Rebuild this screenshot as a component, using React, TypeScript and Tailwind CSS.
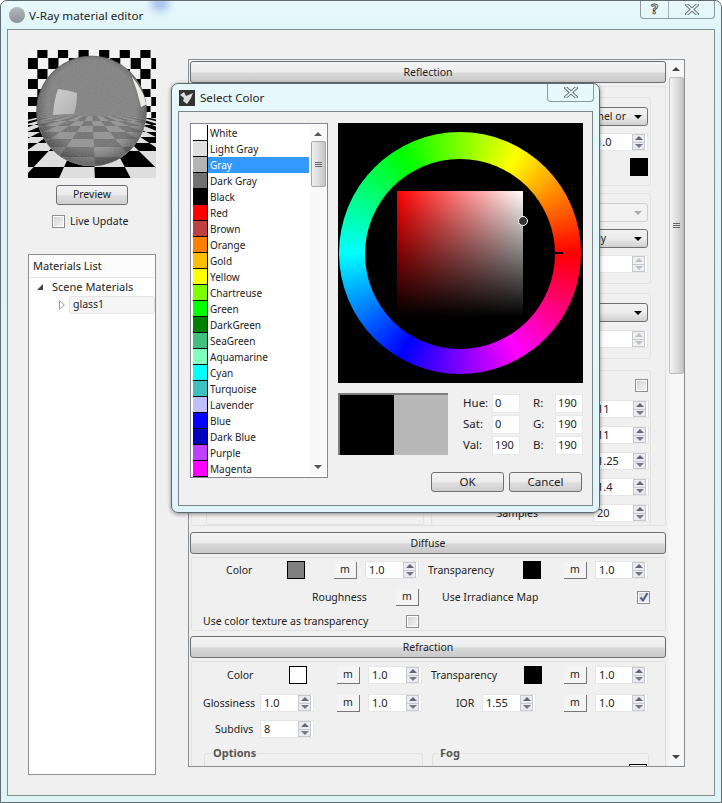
import React from "react";

const Tri = ({ up, cls = "border-b-[#555] border-t-[#555]" }: { up?: boolean; cls?: string }) => (
  <div className={`w-0 h-0 border-l-[4px] border-r-[4px] border-l-transparent border-r-transparent ${up ? "border-b-[4px] border-t-0" : "border-t-[4px] border-b-0"} ${cls}`} />
);

const Spinner = ({ value, w = "w-[53px]", disabled }: { value?: string; w?: string; disabled?: boolean }) => (
  <div className={`${w} h-[18px] bg-white flex items-center border border-[#e6e6e6] shrink-0`}>
    <span className="flex-1 pl-[3px] pb-px leading-none text-[11px] text-[#222] whitespace-nowrap">{value}</span>
    <div className={`w-[13px] h-[16px] mr-[2px] flex flex-col border border-[#c4c8d0] ${disabled ? "bg-[#f0f0f0]" : "bg-[#eaeaf0]"}`}>
      <div className="flex-1 flex items-center justify-center border-b border-[#c4c8d0]"><Tri up cls={disabled ? "border-b-[#c0c0c0]" : "border-b-[#667]"} /></div>
      <div className="flex-1 flex items-center justify-center"><Tri cls={disabled ? "border-t-[#c0c0c0]" : "border-t-[#778]"} /></div>
    </div>
  </div>
);

const MBtn = ({ ml = "" }: { ml?: string }) => (
  <div className={`${ml} w-[23px] h-[17px] shrink-0 bg-[#f4f4f4] border-r border-b border-[#777] flex items-center justify-center leading-none text-[#222]`}>m</div>
);

const Swatch = ({ color, ml = "" }: { color: string; ml?: string }) => (
  <div className={`${ml} ${color} w-[18px] h-[18px] shrink-0 border border-black`} />
);

const Check = ({ checked, ml = "" }: { checked?: boolean; ml?: string }) => (
  <div className={`${ml} w-[13px] h-[13px] shrink-0 border border-[#8e8f8f] p-[1px] bg-white flex`}>
    <div className="flex-1 bg-gradient-to-br from-[#d4d4d4] to-[#f4f4f4] flex items-center justify-center">
      {checked && (
        <svg width="10" height="10" viewBox="0 0 10 10"><path d="M1.5 5.5 L4 8.5 L8.5 1" stroke="#4a5f8f" strokeWidth="2" fill="none" /></svg>
      )}
    </div>
  </div>
);

const Combo = ({ text, disabled, gap = "gap-[8px]" }: { text?: string; disabled?: boolean; gap?: string }) => (
  <div className={`w-[100px] h-[19px] rounded-[3px] flex items-center justify-end ${gap} pr-[5px] border whitespace-nowrap ${disabled ? "border-[#d0d0d0] bg-[#f2f2f2]" : "border-[#707070] bg-gradient-to-b from-[#f2f2f2] via-[#ebebeb] to-[#cfcfcf]"}`}>
    <span className="text-[#222]">{text}</span>
    <div className={`w-0 h-0 border-l-[4px] border-r-[4px] border-t-[4px] border-l-transparent border-r-transparent ${disabled ? "border-t-[#aaa]" : "border-t-black"}`} />
  </div>
);

const Header = ({ title }: { title: string }) => (
  <div className="h-[22px] w-[476px] shrink-0 rounded-[3px] border border-[#6b6f72] bg-[linear-gradient(to_bottom,#f4f4f4,#ececec_50%,#d8d8d8_55%,#c9c9c9)] flex items-center justify-center pt-px text-[#222]">
    {title}
  </div>
);

const X = ({ size = 14 }: { size?: number }) => (
  <svg width={size} height={size - 3} viewBox="0 0 14 11">
    <path d="M2 1 L12 10 M12 1 L2 10" stroke="#5f6a72" strokeWidth="3.4" strokeLinecap="square" fill="none" />
    <path d="M2 1 L12 10 M12 1 L2 10" stroke="#f4fbfd" strokeWidth="1.6" strokeLinecap="square" fill="none" />
  </svg>
);

const Preview = () => {
  const wallRows = [0, 8, 19, 29, 39, 47, 56, 62, 68];
  const wall: React.ReactNode[] = [];
  for (let r = 0; r < wallRows.length - 1; r++) {
    for (let c = -1; c < 7; c++) {
      const x = 9.3 + c * 20.6 + (r % 2 ? -9.6 : 0);
      wall.push(<rect key={`w${r}-${c}`} x={x} y={wallRows[r]} width={10.2} height={wallRows[r + 1] - wallRows[r]} fill="#000" />);
    }
  }
  const cells = (rows: number[], vy: number, k: number, a: string, b: string | null, prefix: string) => {
    const out: React.ReactNode[] = [];
    const X0 = (i: number, y: number) => 64 + (i + 0.08) * k * (y - vy);
    for (let r = 0; r < rows.length - 1; r++) {
      for (let i = -14; i < 14; i++) {
        const even = (((r + i) % 2) + 2) % 2 === 0;
        const fill = even ? a : b;
        if (!fill) continue;
        const y1 = rows[r], y2 = rows[r + 1];
        out.push(<polygon key={`${prefix}${r}-${i}`} points={`${X0(i, y1)},${y1} ${X0(i + 1, y1)},${y1} ${X0(i + 1, y2)},${y2} ${X0(i, y2)},${y2}`} fill={fill} />);
      }
    }
    return out;
  };
  return (
    <svg width="128" height="128" viewBox="0 0 128 128" className="block">
      <defs>
        <filter id="noise" x="0" y="0" width="100%" height="100%">
          <feTurbulence type="fractalNoise" baseFrequency="0.9" numOctaves="2" seed="4" />
          <feColorMatrix type="matrix" values="0 0 0 0 0.42  0 0 0 0 0.42  0 0 0 0 0.42  1.4 0 0 0 -0.5" />
        </filter>
        <clipPath id="ball"><circle cx="63.5" cy="61" r="55" /></clipPath>
        <radialGradient id="shade" cx="50%" cy="45%" r="52%">
          <stop offset="78%" stopColor="#000" stopOpacity="0" />
          <stop offset="100%" stopColor="#000" stopOpacity="0.3" />
        </radialGradient>
        <linearGradient id="hl" x1="0" y1="0" x2="1" y2="1">
          <stop offset="0" stopColor="#cfcfcf" />
          <stop offset="1" stopColor="#b0b0b0" />
        </linearGradient>
      </defs>
      <rect width="128" height="128" fill="#f2f2f2" />
      {wall}
      <rect y="68" width="128" height="60" fill="#dedede" />
      {cells([68, 75, 82, 87, 93, 101, 117, 128], 55, 0.49, "#000", null, "f")}
      <circle cx="63.5" cy="61" r="55" fill="#858585" stroke="#555" strokeWidth="0.6" />
      <g clipPath="url(#ball)">
        <rect y="66" width="128" height="52" fill="#8a8a8a" />
        {cells([66, 71, 76, 82, 89, 97, 107, 118], 60, 0.75, "#767676", "#969696", "r")}
        <circle cx="63.5" cy="61" r="55" fill="url(#shade)" />
        <rect width="128" height="128" filter="url(#noise)" opacity="0.35" />
        <path d="M30 39 Q40 40 49 43 Q49 55 46 64 Q35 64 25 65 Q26 50 30 39Z" fill="url(#hl)" />
        <path d="M104 27 Q114 38 119 54 L113 57 Q110 42 104 27Z" fill="#ecece6" />
      </g>
    </svg>
  );
};

const colors: [string, string][] = [
  ["White", "bg-[#ffffff]"],
  ["Light Gray", "bg-[#e0e0e0]"],
  ["Gray", "bg-[#b4b4b4]"],
  ["Dark Gray", "bg-[#707070]"],
  ["Black", "bg-[#000000]"],
  ["Red", "bg-[#ff0000]"],
  ["Brown", "bg-[#bf4040]"],
  ["Orange", "bg-[#ff8000]"],
  ["Gold", "bg-[#ffbf00]"],
  ["Yellow", "bg-[#ffff00]"],
  ["Chartreuse", "bg-[#80ff00]"],
  ["Green", "bg-[#00ff00]"],
  ["DarkGreen", "bg-[#008000]"],
  ["SeaGreen", "bg-[#40bf80]"],
  ["Aquamarine", "bg-[#80ffbf]"],
  ["Cyan", "bg-[#00ffff]"],
  ["Turquoise", "bg-[#40bfbf]"],
  ["Lavender", "bg-[#bfbfff]"],
  ["Blue", "bg-[#0000ff]"],
  ["Dark Blue", "bg-[#0000bf]"],
  ["Purple", "bg-[#bf40ff]"],
  ["Magenta", "bg-[#ff00ff]"],
];

const Field = ({ label, value, w, ml = "" }: { label: string; value: string; w: string; ml?: string }) => (
  <div className={`flex items-center h-[20px] ${ml}`}>
    <span className={`${w} text-[11.5px] text-[#222]`}>{label}</span>
    <div className="w-[28px] h-[19px] bg-white border border-[#e8e8e8] pl-[2px] text-[11px] leading-[16px] text-[#222]">{value}</div>
  </div>
);

const DlgBtn = ({ label }: { label: string }) => (
  <div className="w-[73px] h-[20px] rounded-[3px] border border-[#707070] bg-[linear-gradient(to_bottom,#f2f2f2,#ebebeb_50%,#dddddd_55%,#cfcfcf)] flex items-center justify-center text-[11.5px] text-[#222]">{label}</div>
);

const Dialog = () => (
  <div className="absolute left-[170px] top-[82px] w-[429px] h-[430px] rounded-[7px] border border-[#5d6a70] bg-[linear-gradient(to_bottom,#e6f8fc,#dff5fb)] shadow-[0_1px_4px_rgba(0,0,0,0.45)] flex flex-col">
    <div className="h-[27px] flex items-center pl-[7px] shrink-0">
      <div className="w-[16px] h-[16px] bg-[#333] flex items-center justify-center overflow-hidden">
        <svg width="16" height="16" viewBox="0 0 16 16"><path d="M1 5 L5 2 L7 6 L14 3 L12 8 L8 14 L4 11 L5 8Z" fill="#dcdcdc" /></svg>
      </div>
      <span className="ml-[5px] text-[11.6px] text-[#222]">Select Color</span>
    </div>
    <div className="absolute right-[5px] top-0 w-[47px] h-[18px] rounded-b-[4px] border border-t-0 border-[#8c989e] bg-[#e8f9fd] flex items-center justify-center">
      <X />
    </div>
    <div className="mx-[6px] h-[395px] bg-[#f0f0f0] border border-[#7b868c] pl-[11px] pt-[11px] flex">
      <div className="w-[138px] h-[355px] border border-[#828790] bg-white flex shrink-0 p-[1px]">
        <div className="w-[118px] flex flex-col">
          {colors.map(([n, c]) => (
            <div key={n} className={`h-[16px] flex items-stretch shrink-0 ${n === "Gray" ? "bg-[#3399ff] text-white" : "text-[#222]"}`}>
              <div className="w-[16px] shrink-0 bg-white pl-[1px]">
                <div className={`${c} h-[16px] w-[15px] border-b border-r border-black`} />
              </div>
              <span className="pl-[2px] text-[10px] leading-[16px]">{n}</span>
            </div>
          ))}
        </div>
        <div className="w-[16px] ml-[1px] flex flex-col items-center pt-[7px] pb-[7px] bg-[#f8f8f8]">
          <Tri up cls="border-b-[#555]" />
          <div className="mt-[5px] w-[15px] h-[46px] rounded-[2px] border border-[#a8a8a8] bg-[linear-gradient(to_right,#f0f0f0,#dcdcdc,#c4c4c4)] flex flex-col items-center justify-center gap-[1px]">
            <div className="w-[7px] h-px bg-[#666]" />
            <div className="w-[7px] h-px bg-[#666]" />
            <div className="w-[7px] h-px bg-[#666]" />
          </div>
          <div className="flex-1" />
          <Tri cls="border-t-[#555]" />
        </div>
      </div>
      <div className="ml-[10px] w-[245px] flex flex-col">
        <div className="w-[245px] h-[260px] bg-black flex items-center pl-px">
          <div className="relative w-[242px] h-[242px] rounded-full bg-[conic-gradient(from_90deg,#ff0000,#ff00ff,#0000ff,#00ffff,#00ff00,#ffff00,#ff0000)] flex items-center justify-center">
            <div className="mt-[2px] w-[190px] h-[190px] rounded-full bg-black flex items-center justify-center">
              <div className="relative w-[126px] h-[126px] bg-[linear-gradient(to_bottom,transparent,#000),linear-gradient(to_right,#ff0000,#ffffff)]">
                <div className="absolute left-[121px] top-[25px] w-[10px] h-[10px] rounded-full border border-white bg-[#333]" />
              </div>
            </div>
            <div className="absolute left-[214px] top-[120px] w-[10px] h-[2px] bg-black" />
          </div>
        </div>
        <div className="mt-[10px] flex">
          <div className="w-[110px] h-[62px] border-l-2 border-t-2 border-[#7d7d7d] flex">
            <div className="w-[54px] bg-black" />
            <div className="flex-1 bg-[#b8b8b8]" />
          </div>
          <div className="ml-[15px] flex flex-col gap-[1px]">
            <Field label="Hue:" value="0" w="w-[29px]" />
            <Field label="Sat:" value="0" w="w-[29px]" />
            <Field label="Val:" value="190" w="w-[29px]" />
          </div>
          <div className="ml-[13px] flex flex-col gap-[1px]">
            <Field label="R:" value="190" w="w-[22px]" />
            <Field label="G:" value="190" w="w-[22px]" />
            <Field label="B:" value="190" w="w-[22px]" />
          </div>
        </div>
        <div className="mt-[17px] flex justify-end gap-[5px] pr-[1px]">
          <DlgBtn label="OK" />
          <DlgBtn label="Cancel" />
        </div>
      </div>
    </div>
  </div>
);

const Group = ({ h, mt, children }: { h: string; mt: string; children?: React.ReactNode }) => (
  <div className={`${h} ${mt} w-[220px] rounded-[3px] border border-[#e2e2e2] flex flex-col items-end shrink-0 pr-[2px]`}>{children}</div>
);

const ReflectionBody = () => (
  <div className="mt-[3px] ml-[1px] w-[475px] h-[440px] border border-[#e2e2e2] rounded-[2px] shrink-0 flex">
    <div className="ml-[14px] mt-[10px] w-[218px] h-[428px] border border-[#e2e2e2] rounded-[2px]" />
    <div className="ml-[7px] flex flex-col">
      <Group h="h-[89px]" mt="mt-[10px]">
        <div className="mt-[9px]"><Combo text="Channel or" /></div>
        <div className="mt-[7px]"><Spinner value="1.0" w="w-[56px]" /></div>
        <div className="mt-[7px]"><Swatch color="bg-black" /></div>
      </Group>
      <Group h="h-[91px]" mt="mt-[7px]">
        <div className="mt-[9px]"><Combo disabled /></div>
        <div className="mt-[7px]"><Combo text="Only" gap="gap-[28px]" /></div>
        <div className="mt-[7px]"><Spinner disabled /></div>
      </Group>
      <Group h="h-[66px]" mt="mt-[9px]">
        <div className="mt-[9px]"><Combo /></div>
        <div className="mt-[8px]"><Spinner disabled /></div>
      </Group>
      <div className="h-[156px] mt-[11px] w-[220px] rounded-[3px] border border-[#e2e2e2] flex flex-col items-end shrink-0 pr-[1px]">
        <div className="mt-[8px] mr-[1px]"><Check /></div>
        <div className="mt-[8px]"><Spinner value="11" w="w-[56px]" /></div>
        <div className="mt-[8px]"><Spinner value="11" w="w-[56px]" /></div>
        <div className="mt-[8px]"><Spinner value="1.25" w="w-[56px]" /></div>
        <div className="mt-[8px]"><Spinner value="1.4" w="w-[56px]" /></div>
        <div className="mt-[8px] flex items-center">
          <span className="mr-[55px] pt-px text-[#222]">Samples</span>
          <Spinner value="20" w="w-[56px]" />
        </div>
      </div>
    </div>
  </div>
);

const Label = ({ w, text, cls = "" }: { w: string; text: string; cls?: string }) => (
  <span className={`${w} ${cls} shrink-0 whitespace-nowrap pt-px text-[#222]`}>{text}</span>
);

const DiffuseBody = () => (
  <div className="mt-[3px] ml-[1px] w-[475px] h-[74px] border border-[#e2e2e2] rounded-[2px] shrink-0 flex flex-col">
    <div className="flex items-center h-[18px] mt-[3px]">
      <Label w="w-[60px]" cls="ml-[34px]" text="Color" />
      <Swatch color="bg-[#808080]" ml="ml-px" />
      <MBtn ml="ml-[29px]" />
      <div className="ml-[8px]"><Spinner value="1.0" w="w-[54px]" /></div>
      <Label w="w-[95px]" cls="ml-[9px]" text="Transparency" />
      <Swatch color="bg-black" />
      <MBtn ml="ml-[23px]" />
      <div className="ml-[8px]"><Spinner value="1.0" /></div>
    </div>
    <div className="flex items-center h-[18px] mt-[9px]">
      <Label w="w-[84px]" cls="ml-[120px]" text="Roughness" />
      <MBtn />
      <Label w="w-[195px]" cls="ml-[23px]" text="Use Irradiance Map" />
      <Check checked />
    </div>
    <div className="flex items-center h-[18px] mt-[6px]">
      <Label w="w-[203px]" cls="ml-[11px]" text="Use color texture as transparency" />
      <Check />
    </div>
  </div>
);

const RefractionBody = () => (
  <div className="mt-[3px] ml-[1px] w-[475px] h-[110px] border border-[#e2e2e2] rounded-[2px] shrink-0 flex flex-col">
    <div className="flex items-center h-[18px] mt-[4px]">
      <Label w="w-[62px]" cls="ml-[35px]" text="Color" />
      <Swatch color="bg-white" />
      <MBtn ml="ml-[30px]" />
      <div className="ml-[8px]"><Spinner value="1.0" w="w-[54px]" /></div>
      <Label w="w-[93px]" cls="ml-[9px]" text="Transparency" />
      <Swatch color="bg-black" />
      <MBtn ml="ml-[22px]" />
      <div className="ml-[8px]"><Spinner value="1.0" /></div>
    </div>
    <div className="flex items-center h-[18px] mt-[10px]">
      <Label w="w-[57px]" cls="ml-[11px]" text="Glossiness" />
      <Spinner value="1.0" w="w-[54px]" />
      <MBtn ml="ml-[23px]" />
      <div className="ml-[8px]"><Spinner value="1.0" w="w-[54px]" /></div>
      <Label w="w-[26px]" cls="ml-[34px]" text="IOR" />
      <Spinner value="1.55" w="w-[54px]" />
      <MBtn ml="ml-[28px]" />
      <div className="ml-[8px]"><Spinner value="1.0" /></div>
    </div>
    <div className="flex items-center h-[18px] mt-[8px]">
      <Label w="w-[45px]" cls="ml-[23px]" text="Subdivs" />
      <Spinner value="8" w="w-[54px]" />
    </div>
    <div className="flex mt-[15px] ml-[12px] gap-[9px]">
      <div className="relative w-[219px] h-[30px] border border-[#e2e2e2] rounded-[3px]">
        <span className="absolute left-[7px] -top-[7px] bg-[#f0f0f0] px-[1px] font-bold text-[11px] leading-none text-[#555]">Options</span>
      </div>
      <div className="relative w-[217px] h-[30px] border border-[#e2e2e2] rounded-[3px]">
        <span className="absolute left-[6px] -top-[7px] bg-[#f0f0f0] px-[1px] font-bold text-[11px] leading-none text-[#555]">Fog</span>
        <div className="absolute right-[1px] top-[10px] w-[18px] h-[18px] border border-black bg-white" />
      </div>
    </div>
  </div>
);

export default function App() {
  return (
    <div className="relative w-[722px] h-[803px] overflow-hidden rounded-t-[7px] border border-[#5f6b70] bg-[linear-gradient(to_bottom,#e9f9fc,#dcf4fa_40px,#def5f8)] text-[10.5px] [font-family:'Noto_Sans',sans-serif]">
      <div className="absolute left-[150px] -top-[3px] w-[18px] h-[12px] rounded-full bg-[#9db4e8] blur-[4px]" />
      <div className="relative h-[28px] flex items-start">
        <div className="mt-[6px] ml-[8px] w-[16px] h-[16px] rounded-full bg-gradient-to-b from-[#b0b8bc] to-[#8b9498]" />
        <span className="mt-[6px] ml-[4px] text-[11.6px] text-[#222]">V-Ray material editor</span>
        <div className="ml-auto mr-[6px] w-[75px] h-[19px] -mt-px rounded-b-[4px] border border-t-0 border-[#8c989e] flex">
          <div className="w-[28px] border-r border-[#a8b4ba] flex items-center justify-center font-bold text-[14px] leading-none text-white [-webkit-text-stroke:1px_#555]">?</div>
          <div className="flex-1 flex items-center justify-center"><X /></div>
        </div>
      </div>
      <div className="ml-[6px] w-[708px] h-[767px] bg-[#f0f0f0] border border-[#828d92] flex">
        <div className="ml-[20px] w-[128px] flex flex-col items-center shrink-0">
          <div className="mt-[20px]"><Preview /></div>
          <div className="mt-[7px] w-[72px] h-[20px] rounded-[3px] border border-[#707070] bg-[linear-gradient(to_bottom,#f2f2f2,#ebebeb_50%,#dddddd_55%,#cfcfcf)] flex items-center justify-center text-[#222]">Preview</div>
          <div className="mt-[9px] self-start ml-[24px] flex items-center">
            <Check />
            <span className="ml-[5px] text-[#222]">Live Update</span>
          </div>
          <div className="mt-[24px] w-[128px] h-[521px] bg-white border border-[#8a8f94] flex flex-col">
            <div className="h-[23px] flex items-center pl-[4px] border-b border-[#e8e8e8] bg-[#fbfbfb] text-[11px] text-[#222]">Materials List</div>
            <div className="flex items-center h-[18px] pl-[8px]">
              <div className="w-0 h-0 border-b-[6px] border-l-[6px] border-l-transparent border-b-[#444]" />
              <span className="ml-[9px] text-[11px] text-[#222]">Scene Materials</span>
            </div>
            <div className="flex items-center h-[18px] pl-[30px]">
              <svg width="6" height="10" viewBox="0 0 6 10"><path d="M0.5 0.8 L5.4 5 L0.5 9.2Z" fill="#fff" stroke="#9a9a9a" /></svg>
              <div className="ml-[4px] w-[86px] h-[18px] rounded-[3px] border border-[#e4e4e4] bg-[#f5f5f5] pl-[3px] text-[10.5px] leading-[15px] text-[#222]">glass1</div>
            </div>
          </div>
        </div>
        <div className="ml-[32px] mt-[29px] w-[497px] h-[708px] border border-[#8a8f94] bg-[#f0f0f0] flex overflow-hidden">
          <div className="w-[479px] pl-px pt-px flex flex-col overflow-hidden">
            <Header title="Reflection" />
            <ReflectionBody />
            <div className="mt-[6px]"><Header title="Diffuse" /></div>
            <DiffuseBody />
            <div className="mt-[5px]"><Header title="Refraction" /></div>
            <RefractionBody />
          </div>
          <div className="w-[16px] flex flex-col items-center pt-[7px] pb-[7px] bg-[#f6f6f6]">
            <Tri up cls="border-b-[#444]" />
            <div className="mt-[6px] w-[15px] h-[297px] rounded-[2px] border border-[#bdbdbd] bg-[linear-gradient(to_right,#f4f4f4,#dedede,#c6c6c6)] flex flex-col items-center justify-center gap-[1px]">
              <div className="w-[7px] h-px bg-[#666]" />
              <div className="w-[7px] h-px bg-[#666]" />
              <div className="w-[7px] h-px bg-[#666]" />
            </div>
            <div className="flex-1" />
            <Tri cls="border-t-[#444]" />
          </div>
        </div>
      </div>
      <Dialog />
    </div>
  );
}
